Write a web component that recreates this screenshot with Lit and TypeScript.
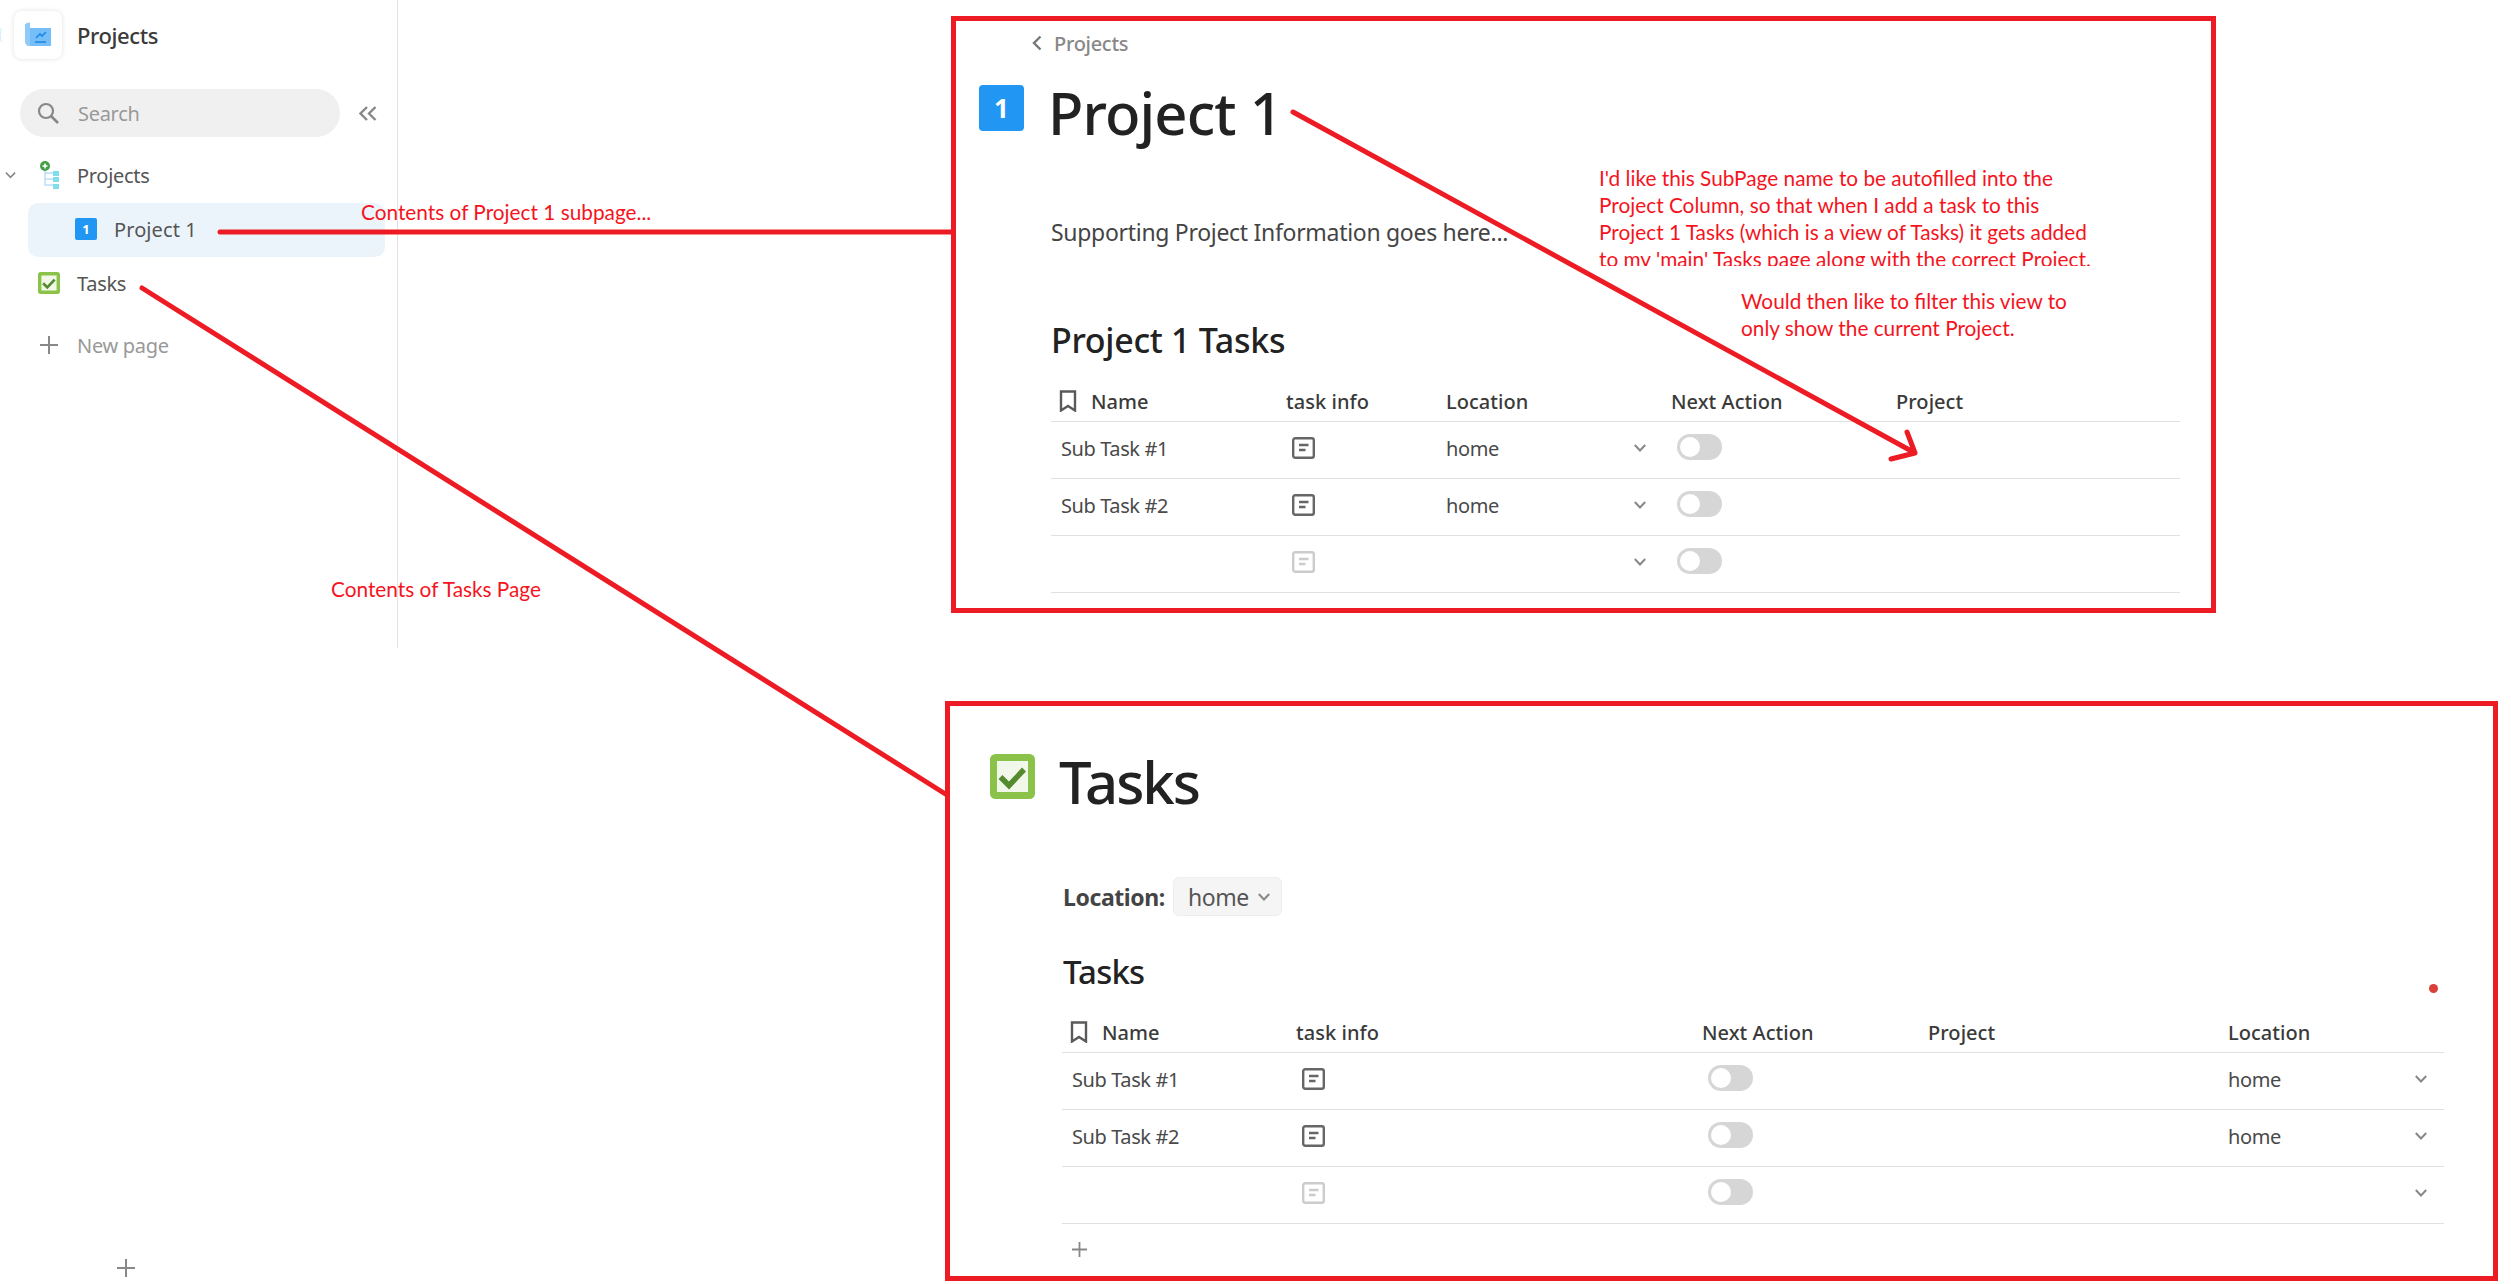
import { LitElement, css, html } from "lit";
import { customElement, property } from "lit/decorators.js";

type Column = {
  label: string;
  width: number;
  kind: "name" | "doc" | "select" | "toggle" | "empty";
};

type Row = {
  name: string;
  location: string;
  muted?: boolean;
};

const chevronDown = html`<svg class="chev" viewBox="0 0 12 8" width="12" height="8">
  <path d="M.8 1 6 6.5 11.2 1" fill="none" stroke="currentColor" stroke-width="2" />
</svg>`;

const docIcon = html`<svg viewBox="0 0 23 22" width="23" height="22">
  <rect x="1.2" y="1.2" width="20.6" height="19.6" rx="2" fill="none" stroke="currentColor" stroke-width="2.4" />
  <path d="M7 8h9.5M7 13h6.5" fill="none" stroke="currentColor" stroke-width="2.4" />
</svg>`;

@customElement("task-table")
export class TaskTable extends LitElement {
  @property({ type: Array })
  columns: Column[] = [];
  @property({ type: Array })
  rows: Row[] = [];

  static styles = css`
    :host {
      display: block;
      font-family: "Noto Sans", sans-serif;
    }
    .row {
      display: grid;
      height: 57px;
      box-sizing: border-box;
      border-bottom: 1px solid #e0e0e0;
      align-items: center;
      padding-bottom: 4px;
      font-size: 20px;
      letter-spacing: -0.4px;
      color: #4a4a4a;
    }
    .head {
      height: 44px;
      padding-bottom: 0;
      padding-top: 3px;
      font-weight: 500;
      letter-spacing: 0.05px;
      color: #3a3a3a;
    }
    .cell {
      display: flex;
      align-items: center;
      min-width: 0;
      padding-left: 8px;
      white-space: nowrap;
    }
    .head .mark {
      margin-right: 14px;
      color: #5a5a5a;
    }
    .name {
      padding-left: 10px;
    }
    .doc {
      padding-left: 14px;
      color: #666;
    }
    .muted .doc {
      color: #ccc;
    }
    .select {
      justify-content: space-between;
      padding-right: 17px;
    }
    .select .chev {
      color: #888;
    }
    .toggle {
      padding-left: 14px;
    }
    .track {
      width: 45px;
      height: 26px;
      box-sizing: border-box;
      padding: 3px;
      margin-top: -3px;
      border-radius: 13px;
      background: #d6d6d6;
    }
    .knob {
      width: 20px;
      height: 20px;
      border-radius: 50%;
      background: #fff;
    }
  `;

  private template() {
    return this.columns.map((c) => `${c.width}px`).join(" ");
  }

  private renderCell(col: Column, row: Row) {
    switch (col.kind) {
      case "name":
        return html`<div class="cell name">${row.name}</div>`;
      case "doc":
        return html`<div class="cell doc">${docIcon}</div>`;
      case "select":
        return html`<div class="cell select"><span>${row.location}</span>${chevronDown}</div>`;
      case "toggle":
        return html`<div class="cell toggle"><div class="track"><div class="knob"></div></div></div>`;
      default:
        return html`<div class="cell"></div>`;
    }
  }

  render() {
    return html`
      <div class="row head" style="grid-template-columns:${this.template()}">
        ${this.columns.map(
          (c) => html`<div class="cell">
            ${c.kind === "name"
              ? html`<svg class="mark" viewBox="0 0 18 22" width="18" height="22">
                  <path d="M2 1.5h14v19l-7-4.5-7 4.5z" fill="none" stroke="currentColor" stroke-width="2.4" />
                </svg>`
              : ""}${c.label}
          </div>`
        )}
      </div>
      ${this.rows.map(
        (row) => html`<div class="row ${row.muted ? "muted" : ""}" style="grid-template-columns:${this.template()}">
          ${this.columns.map((c) => this.renderCell(c, row))}
        </div>`
      )}
    `;
  }
}

const ROWS: Row[] = [
  { name: "Sub Task #1", location: "home" },
  { name: "Sub Task #2", location: "home" },
  { name: "", location: "", muted: true },
];

const PROJECT_COLUMNS: Column[] = [
  { label: "Name", width: 227, kind: "name" },
  { label: "task info", width: 160, kind: "doc" },
  { label: "Location", width: 225, kind: "select" },
  { label: "Next Action", width: 225, kind: "toggle" },
  { label: "Project", width: 292, kind: "empty" },
];

const TASK_COLUMNS: Column[] = [
  { label: "Name", width: 226, kind: "name" },
  { label: "task info", width: 406, kind: "doc" },
  { label: "Next Action", width: 226, kind: "toggle" },
  { label: "Project", width: 300, kind: "empty" },
  { label: "Location", width: 224, kind: "select" },
];

@customElement("app-root")
export class AppRoot extends LitElement {
  static styles = css`
    :host {
      display: block;
      position: relative;
      width: 2511px;
      height: 1284px;
      overflow: hidden;
      background: #fff;
      font-family: "Noto Sans", sans-serif;
    }

    /* sidebar */
    .sidebar {
      display: flex;
      flex-direction: column;
      width: 398px;
      height: 1284px;
    }
    .nav {
      height: 648px;
      box-sizing: border-box;
      border-right: 1px solid #e3e3e3;
      padding-top: 11px;
      font-size: 20px;
      letter-spacing: -0.3px;
      color: #555;
    }
    .brand {
      display: flex;
      align-items: center;
      gap: 15px;
      padding-left: 14px;
      font-size: 22px;
      font-weight: 500;
      letter-spacing: -0.4px;
      color: #3a3a3a;
    }
    .tile {
      display: flex;
      align-items: center;
      justify-content: center;
      width: 48px;
      height: 48px;
      border-radius: 8px;
      background: #fff;
      box-shadow: 0 0 5px rgba(0, 0, 0, 0.12);
    }
    .search-row {
      display: flex;
      align-items: center;
      gap: 19px;
      margin-top: 30px;
      margin-bottom: 12px;
      padding-left: 20px;
    }
    .search {
      display: flex;
      align-items: center;
      gap: 19px;
      width: 320px;
      height: 48px;
      box-sizing: border-box;
      padding-left: 17px;
      border-radius: 24px;
      background: #f0f0f0;
      color: #999;
    }
    .item {
      display: flex;
      align-items: center;
      gap: 17px;
      height: 54px;
      padding-left: 38px;
      padding-bottom: 2px;
      box-sizing: border-box;
    }
    .twist {
      margin-left: -33px;
      margin-right: 5px;
      width: 11px;
      color: #888;
    }
    .item.child {
      width: 357px;
      margin-left: 28px;
      padding-left: 47px;
      border-radius: 10px;
      background: #ebf4fa;
      letter-spacing: 0.1px;
    }
    .item.add {
      margin-top: 8px;
      padding-left: 40px;
      gap: 19px;
      color: #999;
    }
    .foot {
      margin-top: 611px;
      padding-left: 117px;
      color: #888;
    }

    /* page icons */
    .num {
      display: flex;
      align-items: center;
      justify-content: center;
      flex: none;
      width: 22px;
      height: 22px;
      border-radius: 2px;
      background: #2196f3;
      color: #fff;
      font-size: 13px;
      font-weight: 700;
      letter-spacing: 0;
    }
    .num.big {
      width: 45px;
      height: 46px;
      border-radius: 4px;
      font-size: 26px;
    }

    /* screenshots on the canvas */
    .panel {
      position: absolute;
      box-sizing: border-box;
      border: 5px solid #ed1c24;
    }
    .panel-project {
      left: 951px;
      top: 16px;
      width: 1265px;
      height: 597px;
      padding: 9px 0 0 95px;
    }
    .panel-tasks {
      left: 945px;
      top: 701px;
      width: 1553px;
      height: 580px;
      padding: 40px 0 0 113px;
    }
    .crumb {
      display: flex;
      align-items: center;
      gap: 12px;
      height: 26px;
      margin-left: -19px;
      font-size: 20px;
      font-weight: 500;
      letter-spacing: -0.3px;
      color: #888;
    }
    .title {
      display: flex;
      align-items: flex-start;
      gap: 24px;
      height: 72px;
      font-size: 58px;
      line-height: 72px;
      font-weight: 500;
      letter-spacing: -0.9px;
      color: #222;
    }
    .panel-tasks .title {
      letter-spacing: -2px;
    }
    .title-icon {
      display: flex;
      flex: none;
      margin-top: 8px;
      margin-left: -72px;
    }
    .panel-project .title {
      margin-top: 21px;
    }
    .panel-tasks .title-icon {
      margin-left: -73px;
    }
    .body {
      margin: 67px 0 0;
      height: 32px;
      font-size: 23px;
      line-height: 32px;
      letter-spacing: -0.3px;
      color: #444;
    }
    h2 {
      margin: 70px 0 0;
      height: 44px;
      font-size: 34px;
      line-height: 44px;
      font-weight: 500;
      letter-spacing: -0.3px;
      color: #222;
    }
    .panel-project task-table {
      margin-top: 16px;
      width: 1129px;
    }
    .filter {
      display: flex;
      align-items: center;
      gap: 8px;
      margin-top: 59px;
      height: 39px;
      font-size: 23px;
      font-weight: 700;
      letter-spacing: -0.4px;
      color: #444;
    }
    .chip {
      display: flex;
      align-items: center;
      gap: 9px;
      width: 109px;
      height: 39px;
      box-sizing: border-box;
      padding-left: 14px;
      border: 1px solid #eee;
      border-radius: 6px;
      background: #f5f5f5;
      font-weight: 400;
      color: #555;
    }
    .chip .chev {
      color: #888;
    }
    .panel-tasks h2 {
      margin-top: 34px;
      font-size: 33px;
      letter-spacing: -0.8px;
    }
    .panel-tasks task-table {
      margin: 15px 0 0 -1px;
      width: 1382px;
    }
    .add-row {
      display: flex;
      align-items: center;
      height: 50px;
      padding-left: 10px;
      margin-left: -1px;
      color: #888;
    }
    .dot {
      position: absolute;
      left: 1479px;
      top: 278px;
      width: 9px;
      height: 9px;
      border-radius: 50%;
      background: #d9403a;
    }

    /* annotations */
    .note {
      position: absolute;
      font-family: "Lato", sans-serif;
      font-size: 20.8px;
      line-height: 27px;
      color: #f5141e;
      white-space: nowrap;
    }
    .note-project {
      left: 361px;
      top: 198px;
    }
    .note-tasks {
      left: 331px;
      top: 575px;
    }
    .note-fill {
      left: 1599px;
      top: 164px;
      height: 102px;
      overflow: hidden;
    }
    .note-filter {
      left: 1741px;
      top: 287px;
    }
    .edge {
      position: absolute;
      left: 0;
      top: 28px;
    }
    .arrows {
      position: absolute;
      left: 0;
      top: 0;
      pointer-events: none;
    }
  `;

  private tasksIcon(size: number) {
    return html`<svg viewBox="0 0 45 45" width=${size} height=${size} style="flex:none">
      <rect x="3.5" y="3.5" width="38" height="38" rx="2" fill="#f1f8e9" stroke="#8bc34a" stroke-width="7" />
      <path d="M10.5 23 19 31.5 34 15.5" fill="none" stroke="#558b2f" stroke-width="5.5" />
    </svg>`;
  }

  render() {
    return html`
      <aside class="sidebar">
        <div class="nav">
          <div class="brand">
            <div class="tile">
              <svg viewBox="0 0 28 26" width="28" height="26">
                <path d="M1 19V3c0-1.5 2-2.5 5-2.5V6h21v18H5c-2.5 0-4-2-4-5z" fill="#90caf9" />
                <path d="M6 6h21v18H6z" fill="#64b5f6" opacity=".6" />
                <path d="M11 20h11" stroke="#1e88e5" stroke-width="1.6" />
                <path d="M12 16l4-4 2 2 4-4" fill="none" stroke="#1e88e5" stroke-width="1.6" />
              </svg>
            </div>
            Projects
          </div>
          <div class="search-row">
            <div class="search">
              <svg viewBox="0 0 22 22" width="22" height="22">
                <circle cx="9" cy="9" r="7" fill="none" stroke="#888" stroke-width="2.2" />
                <path d="M14 14l7 7" stroke="#888" stroke-width="2.6" />
              </svg>
              Search
            </div>
            <svg viewBox="0 0 18 15" width="18" height="15">
              <path d="M8 1 1.5 7.5 8 14M16.5 1 10 7.5 16.5 14" fill="none" stroke="#888" stroke-width="2.4" />
            </svg>
          </div>
          <div class="item">
            <svg class="twist" viewBox="0 0 12 8" width="11" height="8">
              <path d="M1 1.5 6 6.5l5-5" fill="none" stroke="currentColor" stroke-width="1.8" />
            </svg>
            <svg viewBox="0 0 22 28" width="22" height="28">
              <path d="M7 8v16h10M7 12h10M7 18h10" fill="none" stroke="#bbdefb" stroke-width="1.5" />
              <path d="M15 10h6v5h-6zM15 16h6v5h-6zM15 23h6v5h-6z" fill="#80deea" />
              <circle cx="7" cy="5" r="5" fill="#43a047" />
              <path d="M4.5 5h5M7 2.5v5" stroke="#fff" stroke-width="1.5" />
            </svg>
            Projects
          </div>
          <div class="item child">
            <span class="num">1</span>
            Project 1
          </div>
          <div class="item">${this.tasksIcon(22)} Tasks</div>
          <div class="item add">
            <svg viewBox="0 0 18 18" width="18" height="18">
              <path d="M9 0v18M0 9h18" stroke="#888" stroke-width="2" />
            </svg>
            New page
          </div>
        </div>
        <div class="foot">
          <svg viewBox="0 0 18 18" width="18" height="18">
            <path d="M9 0v18M0 9h18" stroke="#888" stroke-width="2" />
          </svg>
        </div>
      </aside>

      <svg class="edge" viewBox="0 0 2 14" width="2" height="14">
        <path d="M1.5 0 0 7l1.5 7" fill="none" stroke="#cdeefc" stroke-width="1" />
      </svg>

      <section class="panel panel-project">
        <div class="crumb">
          <svg viewBox="0 0 10 16" width="10" height="16">
            <path d="M8.5 1.5 2 8l6.5 6.500" fill="none" stroke="#777" stroke-width="2.4" />
          </svg>
          Projects
        </div>
        <div class="title">
          <span class="num big title-icon">1</span>
          Project 1
        </div>
        <p class="body">Supporting Project Information goes here...</p>
        <h2>Project 1 Tasks</h2>
        <task-table .columns=${PROJECT_COLUMNS} .rows=${ROWS}></task-table>
      </section>

      <section class="panel panel-tasks">
        <div class="title">
          <span class="title-icon">${this.tasksIcon(45)}</span>
          Tasks
        </div>
        <div class="filter">
          Location:
          <div class="chip">home ${chevronDown}</div>
        </div>
        <h2>Tasks</h2>
        <task-table .columns=${TASK_COLUMNS} .rows=${ROWS}></task-table>
        <div class="add-row">
          <svg viewBox="0 0 15 15" width="15" height="15">
            <path d="M7.5 0v15M0 7.5h15" stroke="#888" stroke-width="1.8" />
          </svg>
        </div>
        <div class="dot"></div>
      </section>

      <div class="note note-project">Contents of Project 1 subpage...</div>
      <div class="note note-tasks">Contents of Tasks Page</div>
      <div class="note note-fill">
        I'd like this SubPage name to be autofilled into the<br />
        Project Column, so that when I add a task to this<br />
        Project 1 Tasks (which is a view of Tasks) it gets added<br />
        to my 'main' Tasks page along with the correct Project.
      </div>
      <div class="note note-filter">
        Would then like to filter this view to<br />
        only show the current Project.
      </div>

      <svg class="arrows" viewBox="0 0 2511 1284" width="2511" height="1284">
        <g fill="none" stroke="#ed1c24" stroke-width="5" stroke-linecap="round" stroke-linejoin="round">
          <path d="M220 232H951" />
          <path d="M1293 112 1915 453M1907 432l8 21-24 6" />
          <path d="M142 288 947 795" />
        </g>
      </svg>
    `;
  }
}
